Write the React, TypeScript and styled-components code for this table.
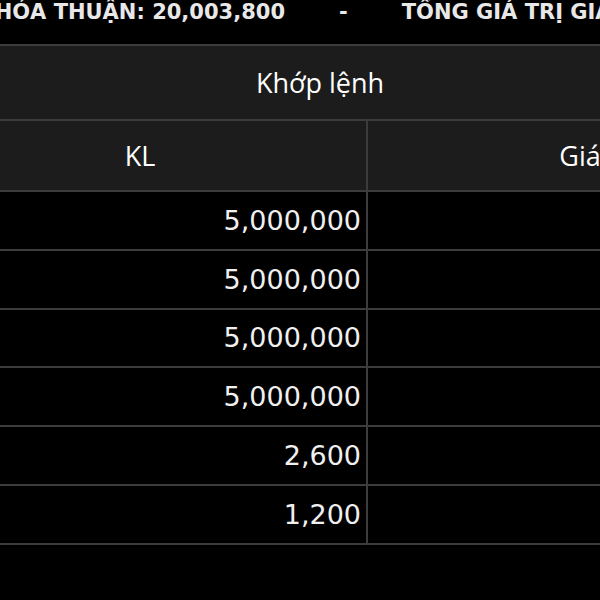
import styled, { createGlobalStyle } from "styled-components";

const GlobalStyle = createGlobalStyle`
  html, body {
    margin: 0;
    padding: 0;
    background: #000;
    overflow: hidden;
  }
`;

// Matched-order rows (volume only, price column is empty in this view)
const rows = ["5,000,000", "5,000,000", "5,000,000", "5,000,000", "2,600", "1,200"];

export default function App() {
  return (
    <>
      <GlobalStyle />
      <Page>
        <SummaryBar>
          <Lead>
            <SummaryText>TỔNG KL THỎA THUẬN: 20,003,800</SummaryText>
          </Lead>
          <Separator>-</Separator>
          <SummaryText>TỔNG GIÁ TRỊ GIAO DỊCH THỎA THUẬN: 1,234,567</SummaryText>
        </SummaryBar>
        <Table>
          <GroupHeader>Khớp lệnh</GroupHeader>
          <HeadCell $divider>KL</HeadCell>
          <HeadCell>Giá</HeadCell>
          {rows.map((kl, i) => (
            <Row key={i}>
              <Cell $divider>{kl}</Cell>
              <Cell />
            </Row>
          ))}
        </Table>
      </Page>
    </>
  );
}

const Page = styled.div`
  width: 600px;
  height: 600px;
  overflow: hidden;
  background: #000;
  color: #fff;
`;

const SummaryBar = styled.div`
  display: flex;
  align-items: flex-start;
  height: 44px;
  box-sizing: border-box;
  white-space: nowrap;
  font-family: "DejaVu Sans", Verdana, sans-serif;
  font-weight: bold;
  font-size: 21px;
  line-height: 24px;
  color: #e8e8e8;
`;

const Lead = styled.div`
  display: flex;
  justify-content: flex-end;
  width: 285px;
  flex-shrink: 0;
`;

const SummaryText = styled.span`
  flex-shrink: 0;
`;

const Separator = styled.span`
  margin: 0 54px 0 54px;
  flex-shrink: 0;
`;

const Table = styled.div`
  display: grid;
  grid-template-columns: 454px 424px;
  width: 878px;
  margin-left: -86px;
  border-top: 2px solid #3c3c3c;
`;

const GroupHeader = styled.div`
  grid-column: 1 / -1;
  height: 73px;
  display: flex;
  align-items: center;
  justify-content: center;
  padding-right: 66px;
  background: #1c1c1c;
  border-bottom: 2px solid #3c3c3c;
  font-family: "Open Sans", Roboto, sans-serif;
  font-size: 27px;
  color: #fff;
`;

const HeadCell = styled.div<{ $divider?: boolean }>`
  height: 69px;
  display: flex;
  align-items: center;
  justify-content: center;
  background: #1c1c1c;
  border-bottom: 2px solid #3c3c3c;
  border-right: ${(p) => (p.$divider ? "2px solid #3c3c3c" : "none")};
  font-family: "Open Sans", Roboto, sans-serif;
  font-size: 27px;
  color: #fff;
`;

const Row = styled.div`
  display: contents;
`;

const Cell = styled.div<{ $divider?: boolean }>`
  height: 56.8px;
  display: flex;
  align-items: center;
  justify-content: flex-end;
  padding-right: 5px;
  border-bottom: 2px solid #3c3c3c;
  border-right: ${(p) => (p.$divider ? "2px solid #3c3c3c" : "none")};
  font-family: "DejaVu Sans", Verdana, sans-serif;
  font-size: 27px;
  color: #f0f0f0;
`;
